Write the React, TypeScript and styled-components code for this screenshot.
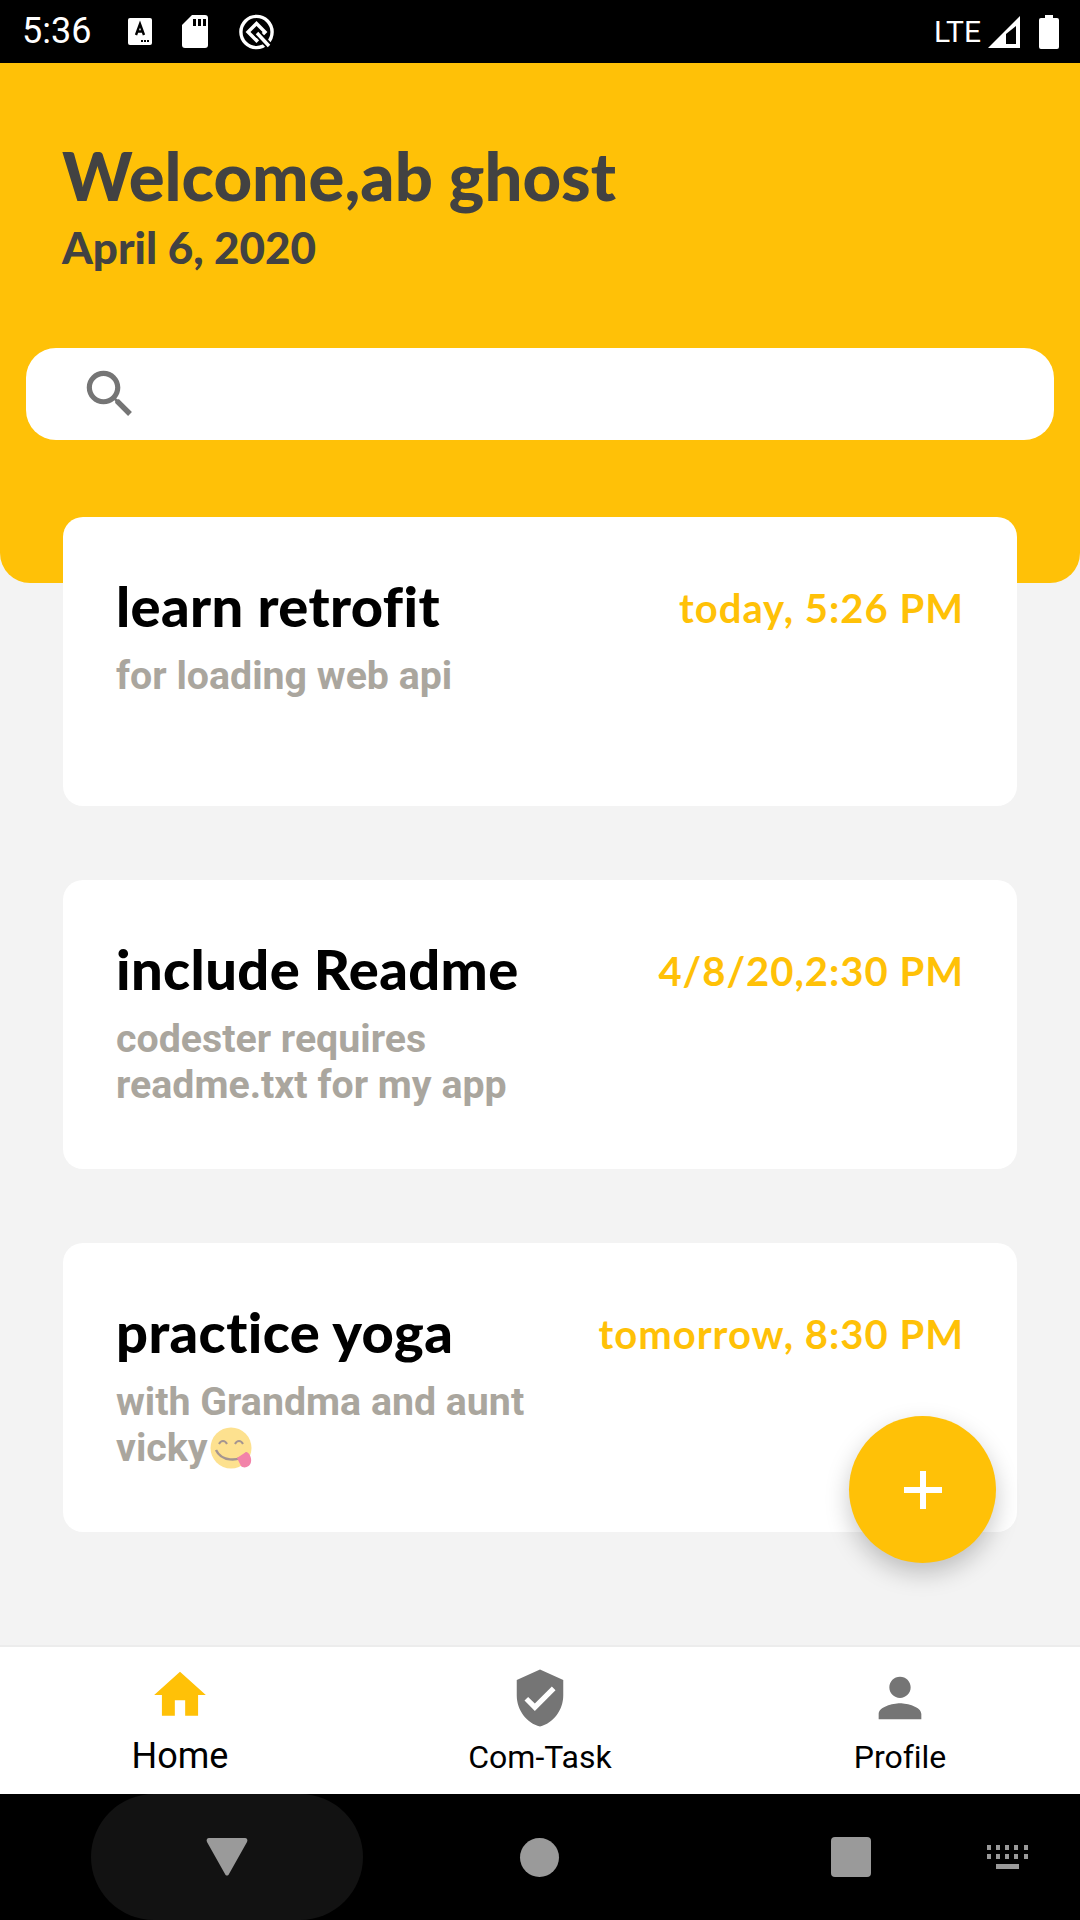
import styled, { createGlobalStyle } from 'styled-components';
import React from 'react';

const YELLOW = '#ffc107';
const HEADING = '"Lato", "Open Sans", sans-serif';

const GlobalStyle = createGlobalStyle`
  html, body {
    margin: 0;
    padding: 0;
    background: #000;
  }
  * {
    box-sizing: border-box;
  }
`;

const Screen = styled.div`
  position: relative;
  display: flex;
  flex-direction: column;
  width: 1080px;
  height: 1920px;
  overflow: hidden;
  background: #f3f3f3;
  font-family: Roboto, sans-serif;
  font-variant-ligatures: none;
`;

const StatusBar = styled.div`
  display: flex;
  align-items: center;
  height: 63px;
  padding: 0 21px 0 22px;
  background: #000;
  color: #fff;
`;

const Clock = styled.span`
  width: 106px;
  font-size: 36px;
  line-height: 63px;
`;

const StatusIcons = styled.div<{ $gap: number; $shift?: number }>`
  display: flex;
  align-items: center;
  gap: ${(p) => p.$gap}px;
  margin-left: ${(p) => p.$shift ?? 0}px;
`;

const StatusSpacer = styled.div`
  flex: 1;
`;

const NetworkLabel = styled.span`
  font-size: 30px;
  line-height: 63px;
`;

const Header = styled.header`
  height: 520px;
  padding: 75px 26px 0;
  background: ${YELLOW};
  border-radius: 0 0 30px 30px;
`;

const Greeting = styled.h1`
  margin: 0 0 0 36px;
  font-family: ${HEADING};
  font-size: 67px;
  font-weight: 900;
  line-height: 74px;
  color: #424242;
`;

const DateLine = styled.div`
  margin: 12px 0 0 36px;
  font-family: ${HEADING};
  font-size: 44px;
  font-weight: 900;
  line-height: 46px;
  color: #424242;
`;

const SearchBar = styled.div`
  display: flex;
  align-items: center;
  height: 92px;
  margin-top: 78px;
  padding-left: 53px;
  background: #fff;
  border-radius: 30px;
`;

const CardList = styled.main`
  display: flex;
  flex-direction: column;
  gap: 74px;
  margin-top: -66px;
  padding: 0 63px;
`;

const Card = styled.article`
  display: grid;
  grid-template-columns: auto 1fr;
  align-content: start;
  height: 289px;
  padding: 56px 53px 0 53px;
  background: #fff;
  border-radius: 20px;
`;

const CardTitle = styled.h2`
  margin: 0;
  font-family: ${HEADING};
  font-size: 56px;
  font-weight: 900;
  line-height: 66px;
  letter-spacing: 0.4px;
  color: #000;
`;

const CardTime = styled.div`
  justify-self: end;
  padding-top: 2px;
  font-family: ${HEADING};
  font-size: 40px;
  font-weight: 700;
  line-height: 66px;
  letter-spacing: 1px;
  color: ${YELLOW};
`;

const CardNote = styled.p`
  grid-column: 1 / 3;
  max-width: 430px;
  margin: 12px 0 0;
  font-size: 39.3px;
  font-weight: 700;
  line-height: 46px;
  color: #aaa69e;
`;

const Emoji = styled.svg`
  width: 43px;
  height: 43px;
  margin-left: 2px;
  vertical-align: -9px;
  opacity: 0.55;
`;

const Fab = styled.button`
  position: absolute;
  left: 849px;
  top: 1416px;
  display: flex;
  align-items: center;
  justify-content: center;
  width: 147px;
  height: 147px;
  padding: 0;
  border: none;
  border-radius: 50%;
  background: ${YELLOW};
  box-shadow: 0 10px 24px rgba(0, 0, 0, 0.22);
`;

const Filler = styled.div`
  flex: 1;
`;

const BottomNav = styled.nav`
  display: grid;
  grid-template-columns: repeat(3, 360px);
  height: 149px;
  background: #fff;
  border-top: 2px solid #ececec;
`;

const NavItem = styled.div`
  display: flex;
  flex-direction: column;
  align-items: center;
  padding-top: 18px;
`;

const NavIcon = styled.div<{ $lift?: number }>`
  display: flex;
  align-items: center;
  justify-content: center;
  height: 66px;
  padding-bottom: ${(p) => p.$lift ?? 0}px;
`;

const NavLabel = styled.span<{ $active?: boolean }>`
  margin-top: ${(p) => (p.$active ? 3 : 4)}px;
  font-size: ${(p) => (p.$active ? 36 : 32)}px;
  line-height: 44px;
  color: #000;
`;

const SystemNav = styled.div`
  display: flex;
  align-items: center;
  height: 126px;
  padding-left: 91px;
  background: #000;
`;

const BackPill = styled.div`
  display: flex;
  align-items: center;
  justify-content: center;
  width: 272px;
  height: 126px;
  background: #121212;
  border-radius: 70px;
`;

const HomeDot = styled.div`
  width: 39px;
  height: 39px;
  margin-left: 157px;
  border-radius: 50%;
  background: #9a9a9a;
`;

const RecentSquare = styled.div`
  width: 40px;
  height: 40px;
  margin-left: 272px;
  border-radius: 4px;
  background: #9a9a9a;
`;

const KeyboardIcon = styled.svg`
  width: 42px;
  height: 24px;
  margin-left: 116px;
`;

function AppNotificationIcon() {
  return (
    <svg width="24" height="27" viewBox="0 0 24 27">
      <path d="M2 0h20a2 2 0 0 1 2 2v23a2 2 0 0 1-2 2H2a2 2 0 0 1-2-2V2a2 2 0 0 1 2-2z" fill="#fff" />
      <path d="M8 17l4-11 4 11M9.5 13.5h5" fill="none" stroke="#000" strokeWidth="2.4" />
      <path d="M13 22h2v2h-2zM16 22h2v2h-2zM19 22h2v2h-2z" fill="#000" />
    </svg>
  );
}

function SdCardIcon() {
  return (
    <svg width="26" height="33" viewBox="0 0 26 33">
      <path d="M10 0h13a3 3 0 0 1 3 3v27a3 3 0 0 1-3 3H3a3 3 0 0 1-3-3V10z" fill="#fff" />
      <path d="M11 4h3v7h-3zM16 4h3v7h-3zM21 4h3v7h-3z" fill="#000" />
    </svg>
  );
}

function AndroidQIcon() {
  return (
    <svg width="37" height="36" viewBox="0 0 37 36">
      <circle cx="18.5" cy="18" r="15.6" fill="none" stroke="#fff" strokeWidth="3.4" />
      <path d="M18.5 9.5l-8.5 8.5 8.5 8.5 8.5-8.5z" fill="none" stroke="#fff" strokeWidth="3.4" />
      <path d="M19 19l14 15" stroke="#000" strokeWidth="7" />
      <path d="M19 19l12 13" stroke="#fff" strokeWidth="3.4" />
    </svg>
  );
}

function SignalIcon() {
  return (
    <svg width="32" height="32" viewBox="0 0 32 32">
      <path d="M32 0v32H0z" fill="#fff" />
      <path d="M28 10v18H18V18z" fill="#000" />
    </svg>
  );
}

function BatteryIcon() {
  return (
    <svg width="20" height="34" viewBox="0 0 20 34">
      <path d="M6 0h8v3h4a2 2 0 0 1 2 2v27a2 2 0 0 1-2 2H2a2 2 0 0 1-2-2V5a2 2 0 0 1 2-2h4z" fill="#fff" />
    </svg>
  );
}

function SearchIcon() {
  return (
    <svg width="62" height="62" viewBox="0 0 24 24">
      <path
        fill="#757575"
        d="M15.5 14h-.79l-.28-.27C15.41 12.59 16 11.11 16 9.5 16 5.91 13.09 3 9.5 3S3 5.91 3 9.5 5.91 16 9.5 16c1.61 0 3.09-.59 4.23-1.57l.27.28v.79l5 4.99L20.49 19l-4.99-5zm-6 0C7.01 14 5 11.99 5 9.5S7.01 5 9.5 5 14 7.01 14 9.5 11.99 14 9.5 14z"
      />
    </svg>
  );
}

function TongueEmoji() {
  return (
    <Emoji viewBox="0 0 43 43">
      <circle cx="21" cy="21" r="20.5" fill="#fcc934" />
      <path d="M9 17c2-4 6-4 8 0M25 17c2-4 6-4 8 0" fill="none" stroke="#5d4037" strokeWidth="2" />
      <path d="M6 23c5 11 22 13 31 3" fill="none" stroke="#5d4037" strokeWidth="2.4" />
      <path d="M27 31l9-6c3 0 6 6 5 10-1 5-7 7-10 4z" fill="#e91e63" />
    </Emoji>
  );
}

const tasks = [
  { title: 'learn retrofit', time: 'today, 5:26 PM', note: 'for loading web api' },
  { title: 'include Readme', time: '4/8/20,2:30 PM', note: 'codester requires readme.txt for my app' },
  { title: 'practice yoga', time: 'tomorrow, 8:30 PM', note: 'with Grandma and aunt vicky', emoji: true },
];

export default function App() {
  return (
    <>
      <GlobalStyle />
      <Screen>
        <StatusBar>
          <Clock>5:36</Clock>
          <StatusIcons $gap={30}>
            <AppNotificationIcon />
            <SdCardIcon />
            <AndroidQIcon />
          </StatusIcons>
          <StatusSpacer />
          <StatusIcons $gap={7}>
            <NetworkLabel>LTE</NetworkLabel>
            <SignalIcon />
          </StatusIcons>
          <StatusIcons $gap={0} $shift={19}>
            <BatteryIcon />
          </StatusIcons>
        </StatusBar>

        <Header>
          <Greeting>Welcome,ab ghost</Greeting>
          <DateLine>April 6, 2020</DateLine>
          <SearchBar>
            <SearchIcon />
          </SearchBar>
        </Header>

        <CardList>
          {tasks.map((task) => (
            <Card key={task.title}>
              <CardTitle>{task.title}</CardTitle>
              <CardTime>{task.time}</CardTime>
              <CardNote>
                {task.note}
                {task.emoji && <TongueEmoji />}
              </CardNote>
            </Card>
          ))}
        </CardList>

        <Fab aria-label="add task">
          <svg width="38" height="38" viewBox="0 0 38 38">
            <path d="M16 0h6v16h16v6H22v16h-6V22H0v-6h16z" fill="#fff" />
          </svg>
        </Fab>

        <Filler />

        <BottomNav>
          <NavItem>
            <NavIcon $lift={6}>
              <svg width="62" height="62" viewBox="0 0 24 24">
                <path fill={YELLOW} d="M10 20v-6h4v6h5v-8h3L12 3 2 12h3v8z" />
              </svg>
            </NavIcon>
            <NavLabel $active>Home</NavLabel>
          </NavItem>
          <NavItem>
            <NavIcon>
              <svg width="62" height="62" viewBox="0 0 24 24">
                <path
                  fill="#757575"
                  d="M12 1L3 5v6c0 5.55 3.84 10.74 9 12 5.16-1.26 9-6.45 9-12V5l-9-4zm-2 16l-4-4 1.41-1.41L10 14.17l6.59-6.59L18 9l-8 8z"
                />
              </svg>
            </NavIcon>
            <NavLabel>Com-Task</NavLabel>
          </NavItem>
          <NavItem>
            <NavIcon>
              <svg width="64" height="64" viewBox="0 0 24 24">
                <path
                  fill="#757575"
                  d="M12 12c2.21 0 4-1.79 4-4s-1.79-4-4-4-4 1.79-4 4 1.79 4 4 4zm0 2c-2.67 0-8 1.34-8 4v2h16v-2c0-2.66-5.33-4-8-4z"
                />
              </svg>
            </NavIcon>
            <NavLabel>Profile</NavLabel>
          </NavItem>
        </BottomNav>

        <SystemNav>
          <BackPill>
            <svg width="42" height="38" viewBox="0 0 42 38">
              <path d="M3 0h36c2 0 3 2 2 4L23 36c-1 2-3 2-4 0L1 4C0 2 1 0 3 0z" fill="#9a9a9a" />
            </svg>
          </BackPill>
          <HomeDot />
          <RecentSquare />
          <KeyboardIcon viewBox="0 0 42 24">
            <path
              fill="#9a9a9a"
              d="M0 0h4v5H0zM9 0h4v5H9zM18 0h4v5h-4zM27 0h4v5h-4zM37 0h4v5h-4zM0 9h4v5H0zM9 9h4v5H9zM18 9h4v5h-4zM27 9h4v5h-4zM37 9h4v5h-4zM9 19h23v5H9z"
            />
          </KeyboardIcon>
        </SystemNav>
      </Screen>
    </>
  );
}
